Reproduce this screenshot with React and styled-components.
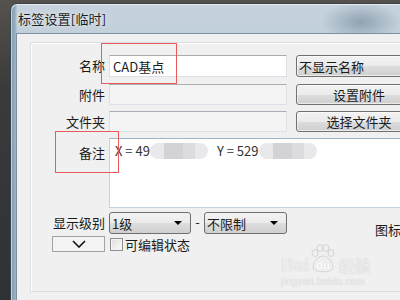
import React from "react";
import styled, { createGlobalStyle } from "styled-components";

const GlobalStyle = createGlobalStyle`
  html, body {
    margin: 0;
    padding: 0;
  }
  body {
    width: 400px;
    height: 300px;
    overflow: hidden;
    background: #3a3a39;
    font-family: "Noto Sans CJK SC", "Liberation Sans", sans-serif;
    font-size: 13px;
    color: #1b1b1b;
  }
`;

const Desktop = styled.div`
    position: relative;
    width: 400px;
    height: 300px;
    overflow: hidden;
    box-sizing: border-box;
    padding: 3px 0 0 10px;
    background: linear-gradient(180deg, #55524e 0%, #3a3a3a 30%, #2e3236 100%);
`;

const Window = styled.div`
    width: 430px;
    height: 330px;
    box-sizing: border-box;
    border: 1px solid #39434c;
    border-top-left-radius: 7px;
    padding-left: 5px;
    background: linear-gradient(
            90deg,
            #7e98ae 0px,
            #9fb4c5 5px,
            transparent 6px
        ),
        radial-gradient(ellipse 40px 20px at 350px 18px, #90a2b0 0%, transparent 100%),
        linear-gradient(180deg, #c6d3de 0%, #b0c2d0 45%, #8ea6b9 100%);
    box-shadow: inset 1px 1px 0 rgba(255, 255, 255, 0.55);
`;

const TitleBar = styled.div`
    height: 29px;
    display: flex;
    align-items: center;
    padding-left: 2px;
    font-size: 13px;
    color: #1e1e1e;
    text-shadow: 0 0 5px rgba(255, 255, 255, 0.9);
    letter-spacing: 0.2px;
`;

const Client = styled.div`
    height: 100%;
    box-sizing: border-box;
    background: #f0f0f0;
    border-top: 1px solid #7d8f9e;
    border-left: 1px solid #7d8f9e;
    padding: 8px 0 0 13px;
`;

const GroupBox = styled.div`
    height: 250px;
    box-sizing: border-box;
    border: 1px solid #d5dfe5;
    border-right: none;
    border-top-left-radius: 3px;
    box-shadow: inset 1px 1px 0 #fff;
    padding-top: 12px;
`;

const Row = styled.div`
    display: flex;
    align-items: ${({ align }) => align || "center"};
    height: ${({ h }) => h}px;
    margin-top: ${({ mt }) => mt || 0}px;
`;

const Label = styled.div`
    width: 78px;
    box-sizing: border-box;
    padding-right: 4px;
    padding-top: ${({ pt }) => pt || 0}px;
    display: flex;
    justify-content: flex-end;
    white-space: nowrap;
    line-height: 16px;
`;

const TextBox = styled.div`
    width: 178px;
    height: 100%;
    box-sizing: border-box;
    border: 1px solid #dbdfe6;
    border-top-color: #abadb3;
    background: ${({ disabled }) => (disabled ? "#f4f4f4" : "#fff")};
    padding: 0 3px;
    display: flex;
    align-items: center;
    font-size: 13px;
`;

const Button = styled.div`
    margin-left: 9px;
    width: 126px;
    height: 100%;
    box-sizing: border-box;
    border: 1px solid #707070;
    border-radius: 3px;
    background: linear-gradient(
        180deg,
        #f2f2f2 0%,
        #ebebeb 50%,
        #dddddd 51%,
        #cfcfcf 100%
    );
    box-shadow: inset 0 0 0 1px rgba(255, 255, 255, 0.6);
    display: flex;
    align-items: center;
    justify-content: ${({ left }) => (left ? "flex-start" : "center")};
    padding-left: ${({ left }) => (left ? "2px" : "0")};
    white-space: nowrap;
`;

const Memo = styled.div`
    width: 320px;
    height: 100%;
    box-sizing: border-box;
    border: 1px solid #c3d3e2;
    border-top-color: #9fb5c9;
    background: #fff;
    padding: 3px 5px;
    line-height: 18px;
    display: flex;
    align-items: center;
    align-self: stretch;
    align-content: flex-start;
    flex-wrap: wrap;
    font-size: 13px;
    color: #333;
`;

const Coord = styled.span`
    margin-left: ${({ ml }) => ml || 0}px;
    white-space: pre;
`;

const Blur = styled.span`
    display: inline-block;
    width: 58px;
    height: 16px;
    border-radius: 8px;
    background: linear-gradient(
        90deg,
        #e9e9eb 0 14px,
        #d3d2d4 14px 33px,
        #dcdbdd 33px 45px,
        #e9e9eb 45px
    );
`;

const Select = styled.div`
    width: ${({ w }) => w}px;
    height: 22px;
    box-sizing: border-box;
    border: 1px solid #707070;
    border-radius: 3px;
    background: linear-gradient(180deg, #f2f2f2 0%, #ebebeb 50%, #dddddd 51%, #cfcfcf 100%);
    display: flex;
    align-items: center;
    justify-content: space-between;
    padding: 0 8px 0 2px;
    white-space: nowrap;
`;

const Arrow = styled.span`
    width: 0;
    height: 0;
    border-left: 4px solid transparent;
    border-right: 4px solid transparent;
    border-top: 4px solid #000;
`;

const Dash = styled.span`
    width: 13px;
    text-align: center;
    margin-top: -3px;
`;

const IconLabel = styled.span`
    margin-left: 88px;
    margin-top: 12px;
    white-space: nowrap;
`;

const ToggleButton = styled.div`
    width: 53px;
    height: 16px;
    box-sizing: border-box;
    border: 1px solid #a3a3a3;
    background: #f3f3f3;
    display: flex;
    align-items: center;
    justify-content: center;
`;

const CheckBox = styled.span`
    margin-left: 1px;
    width: 13px;
    height: 13px;
    box-sizing: border-box;
    border: 1px solid #8f8f8f;
    background: linear-gradient(135deg, #dcdcdc 0%, #fcfcfc 100%);
    box-shadow: inset 0 0 0 1px #f4f4f4;
`;

const CheckText = styled.span`
    margin-left: 2px;
    white-space: nowrap;
`;

const Mark = styled.div`
    position: absolute;
    left: ${({ x }) => x}px;
    top: ${({ y }) => y}px;
    width: ${({ w }) => w}px;
    height: ${({ h }) => h}px;
    box-sizing: border-box;
    border: 1.5px solid #e85a5c;
`;

const Watermark = styled.div`
    position: absolute;
    left: 281px;
    top: 244px;
    color: #ececec;
    text-shadow: 0 0 1px #c8c8c8;
    font-family: "Liberation Sans", sans-serif;
`;

const LogoLine = styled.div`
    display: flex;
    align-items: flex-end;
    font-weight: bold;
    font-size: 18px;
    line-height: 18px;
`;

const Cn = styled.span`
    margin-left: 2px;
    font-family: "Noto Sans CJK SC", sans-serif;
    font-size: 16px;
`;

const Url = styled.div`
    font-size: 10px;
    margin-top: 2px;
    letter-spacing: 0.2px;
`;

function Paw() {
    return (
        <svg width="28" height="30" viewBox="0 0 28 30">
            <g fill="#efefef" stroke="#cdcdcd" strokeWidth="0.8">
                <ellipse cx="6" cy="9" rx="3" ry="3.5" />
                <ellipse cx="11" cy="4" rx="3" ry="3.5" />
                <ellipse cx="17" cy="4" rx="3" ry="3.5" />
                <ellipse cx="22" cy="9" rx="3" ry="3.5" />
                <path d="M4 24 C4 16 10 12 14 12 C18 12 24 16 24 24 C24 29 4 29 4 24 Z" />
            </g>
            <text
                x="14"
                y="25"
                textAnchor="middle"
                fontSize="11"
                fontWeight="bold"
                fontFamily="Liberation Sans, sans-serif"
                fill="#fff"
            >
                du
            </text>
        </svg>
    );
}

function Chevron() {
    return (
        <svg width="14" height="8" viewBox="0 0 14 8">
            <polyline
                points="1,1 7,7 13,1"
                fill="none"
                stroke="#111"
                strokeWidth="1.6"
            />
        </svg>
    );
}

export default function App() {
    return (
        <Desktop>
            <GlobalStyle />
            <Window>
                <TitleBar>标签设置[临时]</TitleBar>
                <Client>
                    <GroupBox>
                        <Row h={22}>
                            <Label>名称</Label>
                            <TextBox>CAD基点</TextBox>
                            <Button left>不显示名称</Button>
                        </Row>
                        <Row h={21} mt={7}>
                            <Label>附件</Label>
                            <TextBox disabled />
                            <Button>设置附件</Button>
                        </Row>
                        <Row h={21} mt={6}>
                            <Label>文件夹</Label>
                            <TextBox disabled />
                            <Button>选择文件夹</Button>
                        </Row>
                        <Row h={70} mt={6} align="flex-start">
                            <Label pt={7}>备注</Label>
                            <Memo>
                                <Coord>X = 49</Coord>
                                <Blur />
                                <Coord ml={9}>Y = 529</Coord>
                                <Blur />
                            </Memo>
                        </Row>
                        <Row h={22} mt={4}>
                            <Label>显示级别</Label>
                            <Select w={82}>
                                1级
                                <Arrow />
                            </Select>
                            <Dash>-</Dash>
                            <Select w={83}>
                                不限制
                                <Arrow />
                            </Select>
                            <IconLabel>图标</IconLabel>
                        </Row>
                        <Row h={16} mt={2}>
                            <Label>
                                <ToggleButton>
                                    <Chevron />
                                </ToggleButton>
                            </Label>
                            <CheckBox />
                            <CheckText>可编辑状态</CheckText>
                        </Row>
                    </GroupBox>
                </Client>
            </Window>
            <Mark x={101} y={43} w={76} h={41} />
            <Mark x={55} y={131} w={64} h={42} />
            <Watermark>
                <LogoLine>
                    Bai
                    <Paw />
                    <Cn>经验</Cn>
                </LogoLine>
                <Url>jingyan.baidu.com</Url>
            </Watermark>
        </Desktop>
    );
}
